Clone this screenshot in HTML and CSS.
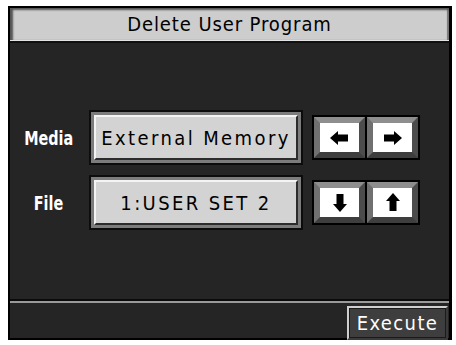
FILE: index.html
```html
<!DOCTYPE html>
<html lang="en">

<head>
    <meta charset="UTF-8">
    <title>Delete User Program</title>
    <link rel="stylesheet" href="styles.css">
</head>

<body>
    <div class="screen">
        <div class="title">Delete User Program</div>

        <div class="main">
            <div class="row">
                <div class="label"><span>Media</span></div>
                <div class="field">
                    <div class="field-face">External Memory</div>
                </div>
                <div class="arrows">
                    <div class="arrow-btn">
                        <svg width="19" height="14" viewBox="0 0 19 14"><path d="M0 7 L8 0 L8 3.5 L18 3.5 L18 10.5 L8 10.5 L8 14 Z" fill="#000"/></svg>
                    </div>
                    <div class="arrow-btn">
                        <svg width="19" height="14" viewBox="0 0 19 14"><path d="M19 7 L11 0 L11 3.5 L1 3.5 L1 10.5 L11 10.5 L11 14 Z" fill="#000"/></svg>
                    </div>
                </div>
            </div>

            <div class="row">
                <div class="label"><span>File</span></div>
                <div class="field">
                    <div class="field-face">1:USER SET 2</div>
                </div>
                <div class="arrows">
                    <div class="arrow-btn">
                        <svg width="14" height="19" viewBox="0 0 14 19"><path d="M7 19 L0 11 L3.5 11 L3.5 1 L10.5 1 L10.5 11 L14 11 Z" fill="#000"/></svg>
                    </div>
                    <div class="arrow-btn">
                        <svg width="14" height="19" viewBox="0 0 14 19"><path d="M7 0 L0 8 L3.5 8 L3.5 18 L10.5 18 L10.5 8 L14 8 Z" fill="#000"/></svg>
                    </div>
                </div>
            </div>
        </div>

        <div class="footer">
            <div class="execute">Execute</div>
        </div>
    </div>
</body>

</html>
```

FILE: styles.css
```css
body {
    margin: 0;
    background-color: #ffffff;
    font-family: "DejaVu Sans Condensed", "DejaVu Sans", sans-serif;
}

.screen {
    margin: 6px 0 0 8px;
    width: 444px;
    height: 334px;
    box-sizing: border-box;
    border: 2px solid #000000;
    border-right-width: 3px;
    background-color: #252525;
    display: flex;
    flex-direction: column;
}

.title {
    height: 32px;
    line-height: 33px;
    background-color: #cdcdcd;
    box-shadow: inset 4px 3px 2px -1px #555555, inset -2px 0 1px #777777;
    border-bottom: 1px solid #e4e4e4;
    text-align: center;
    font-size: 20px;
    letter-spacing: 0.9px;
    color: #000000;
}

.main {
    flex: 1;
    border-top: 2px solid #111111;
    border-bottom: 2px solid #0a0a0a;
    padding-top: 67px;
    display: flex;
    flex-direction: column;
    gap: 10px;
}

.row {
    display: flex;
    align-items: center;
}

.label {
    width: 77px;
    margin-right: 2px;
    text-align: center;
    color: #ffffff;
    font-weight: bold;
    font-size: 20px;
}

.label span {
    display: inline-block;
    transform: scaleX(0.8);
}

.field {
    width: 214px;
    height: 55px;
    box-sizing: border-box;
    border: 2px solid #0c0c0c;
    background-color: #7c7c7c;
    padding: 3px;
}

.field-face {
    height: 100%;
    box-sizing: border-box;
    border: 2px solid #2c2c2c;
    border-top-color: #f4f4f4;
    border-left-color: #f4f4f4;
    background-color: #d3d3d3;
    display: flex;
    align-items: center;
    justify-content: center;
    font-size: 20px;
    letter-spacing: 2.4px;
    color: #000000;
}

.arrows {
    margin-left: 9px;
    width: 108px;
    height: 45px;
    box-sizing: border-box;
    background-color: #000000;
    padding: 2px;
    display: flex;
    gap: 2px;
}

.arrow-btn {
    flex: 1;
    box-sizing: border-box;
    border: 6px solid;
    border-color: #8e8e8e #4c4c4c #3e3e3e #707070;
    background-color: #ffffff;
    display: flex;
    align-items: center;
    justify-content: center;
}

.footer {
    border-top: 2px solid #9a9a9a;
    height: 37px;
    box-sizing: border-box;
    padding: 3px 1px 0 0;
    display: flex;
    justify-content: flex-end;
}

.execute {
    width: 101px;
    height: 34px;
    box-sizing: border-box;
    border: 2px solid #3a3a3a;
    border-top-color: #cfcfcf;
    border-left-color: #cfcfcf;
    box-shadow: inset 0 0 0 1px #1a1a1a;
    background-color: #3e3e3e;
    color: #ffffff;
    font-size: 20px;
    letter-spacing: 1.4px;
    line-height: 30px;
    text-align: center;
}
```
